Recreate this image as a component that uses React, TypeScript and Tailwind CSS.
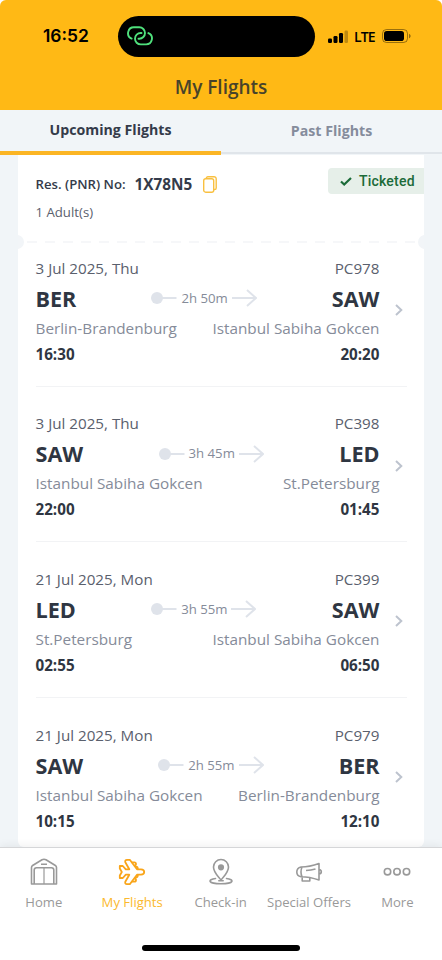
import type { ReactNode } from "react";

type Flight = {
  date: string;
  flightNo: string;
  from: string;
  fromCity: string;
  departure: string;
  to: string;
  toCity: string;
  arrival: string;
  duration: string;
};

const flights: Flight[] = [
  {
    date: "3 Jul 2025, Thu",
    flightNo: "PC978",
    from: "BER",
    fromCity: "Berlin-Brandenburg",
    departure: "16:30",
    to: "SAW",
    toCity: "Istanbul Sabiha Gokcen",
    arrival: "20:20",
    duration: "2h 50m",
  },
  {
    date: "3 Jul 2025, Thu",
    flightNo: "PC398",
    from: "SAW",
    fromCity: "Istanbul Sabiha Gokcen",
    departure: "22:00",
    to: "LED",
    toCity: "St.Petersburg",
    arrival: "01:45",
    duration: "3h 45m",
  },
  {
    date: "21 Jul 2025, Mon",
    flightNo: "PC399",
    from: "LED",
    fromCity: "St.Petersburg",
    departure: "02:55",
    to: "SAW",
    toCity: "Istanbul Sabiha Gokcen",
    arrival: "06:50",
    duration: "3h 55m",
  },
  {
    date: "21 Jul 2025, Mon",
    flightNo: "PC979",
    from: "SAW",
    fromCity: "Istanbul Sabiha Gokcen",
    departure: "10:15",
    to: "BER",
    toCity: "Berlin-Brandenburg",
    arrival: "12:10",
    duration: "2h 55m",
  },
];

function StatusBar() {
  return (
    <div className="flex h-[72px] items-center pl-[43px]">
      <div className="w-[75px] pt-px font-['Inter',sans-serif] text-[17.4px] font-semibold">16:52</div>
      <div className="flex h-[41px] w-[197px] items-center rounded-full bg-black pl-[9px]">
        <svg width="26" height="20" viewBox="0 0 26 20" fill="none" stroke="#4fe07c" strokeWidth="1.9" strokeLinecap="round">
          <path d="M4.6 12.6A5.9 5.9 0 0 1 7.2 1.3H12.3A5.7 5.7 0 0 1 12.3 12.7H11.5" />
          <path d="M21.4 7.1A5.9 5.9 0 0 1 18.8 18.4H13.7A5.7 5.7 0 0 1 13.7 7H14.5" />
        </svg>
      </div>
      <svg className="ml-[13px]" width="20" height="13" viewBox="0 0 20 13">
        <rect x="0" y="8.5" width="4" height="4.5" rx="1.2" />
        <rect x="5.5" y="6" width="4" height="7" rx="1.2" />
        <rect x="11" y="3" width="4" height="10" rx="1.2" />
        <rect x="16.5" y="0.5" width="3.5" height="12.5" rx="1.2" opacity=".25" />
      </svg>
      <div className="ml-[6px] w-[28px] text-[14px] font-semibold tracking-[-0.9px]">LTE</div>
      <svg width="29" height="14" viewBox="0 0 29 14">
        <rect x="0.5" y="0.5" width="25" height="13" rx="4" fill="none" stroke="#000" strokeOpacity=".4" />
        <rect x="2" y="2" width="20" height="10" rx="2.8" />
        <path d="M27 4.7v4.6c1-.4 1.6-1.3 1.6-2.3S28 5.1 27 4.7z" opacity=".45" />
      </svg>
    </div>
  );
}

function Tabs() {
  return (
    <div className="flex h-[45px] text-[14.2px] font-bold">
      <div className="flex flex-1 items-center justify-center border-b-4 border-[#fbb524] pb-[2px] text-[#343b4a]">
        Upcoming Flights
      </div>
      <div className="mb-px flex flex-1 items-center justify-center border-b-2 border-[#e0e5ea] pb-px text-[#858c9c]">
        Past Flights
      </div>
    </div>
  );
}

function Reservation() {
  return (
    <div className="h-[87px] pl-[17.5px]">
      <div className="flex h-[45px] pt-[13px]">
        <div className="flex h-[33px] items-center text-[#343b4a]">
          <span className="w-[99px] text-[13.2px] font-semibold">Res. (PNR) No:</span>
          <span className="w-[68px] text-[15.3px] font-bold">1X78N5</span>
          <svg width="14" height="17" viewBox="0 0 14 17" fill="none" stroke="#f9c040" strokeWidth="1.4">
            <rect x="0.7" y="2.8" width="10" height="13.4" rx="2" />
            <path d="M3.3 2.8V2.3A1.6 1.6 0 0 1 4.9.7H11A2.2 2.2 0 0 1 13.2 2.9V11.9A1.6 1.6 0 0 1 11.6 13.5H10.8" />
          </svg>
        </div>
        <div className="ml-auto flex h-[26px] w-[96px] items-center rounded-l bg-[#e6efe9] pl-[12px] text-[#1b6b39]">
          <svg width="12" height="9" viewBox="0 0 12 9" fill="none" stroke="currentColor" strokeWidth="2.2">
            <path d="M1 4.5 4.2 7.5 11 1" />
          </svg>
          <span className="ml-[7px] font-['Roboto',sans-serif] text-[14px] font-medium tracking-[0.2px]">Ticketed</span>
        </div>
      </div>
      <div className="text-[13.2px] leading-[24px] text-[#5a606d]">1 Adult(s)</div>
    </div>
  );
}

function TearLine() {
  return (
    <div className="relative h-0">
      <svg className="absolute -top-[7px] left-0" width="406" height="14" viewBox="0 0 406 14">
        <path d="M9 7H400" stroke="#f3f5f7" strokeWidth="1.5" strokeDasharray="10 8" />
        <circle cx="-1" cy="7" r="7" fill="#f2f5f8" />
        <circle cx="407" cy="7" r="7" fill="#f2f5f8" />
      </svg>
    </div>
  );
}

function FlightRow({ flight }: { flight: Flight }) {
  return (
    <div className="flex h-[155.5px] items-center border-b border-[#f2f3f5] pt-[4px] last:border-0">
      <div className="w-[344px]">
        <div className="flex justify-between text-[15.2px] leading-[28px] text-[#5a606d]">
          <span>{flight.date}</span>
          <span>{flight.flightNo}</span>
        </div>
        <div className="flex items-center justify-between text-[21.6px] leading-[33px] font-bold text-[#2f3642]">
          <span>{flight.from}</span>
          <div className="flex items-center text-[13.2px] font-normal text-[#858b99]">
            <svg width="26" height="12" viewBox="0 0 26 12">
              <circle cx="6" cy="6" r="6" fill="#dfe3ea" />
              <path d="M11 6H25.5" stroke="#dfe3ea" strokeWidth="2" />
            </svg>
            <span className="mx-[4px]">{flight.duration}</span>
            <svg width="25" height="18" viewBox="0 0 25 18" fill="none" stroke="#dfe3ea" strokeWidth="2">
              <path d="M0 9H24M15 1 24 9 15 17" />
            </svg>
          </div>
          <span>{flight.to}</span>
        </div>
        <div className="flex justify-between text-[15.3px] leading-[27px] text-[#858b99]">
          <span>{flight.fromCity}</span>
          <span>{flight.toCity}</span>
        </div>
        <div className="flex justify-between text-[15.2px] leading-[25px] font-bold text-[#2f3642]">
          <span>{flight.departure}</span>
          <span>{flight.arrival}</span>
        </div>
      </div>
      <svg className="ml-[15px]" width="8" height="12" viewBox="0 0 8 12" fill="none" stroke="#bdc3ce" strokeWidth="2">
        <path d="M1 1 6.3 6 1 11" />
      </svg>
    </div>
  );
}

function NavItem({ label, active, children }: { label: string; active?: boolean; children: ReactNode }) {
  return (
    <div className={`flex w-[88.4px] shrink-0 flex-col items-center ${active ? "text-[#f9a51a]" : "text-[#999]"}`}>
      <svg width="28" height="28" viewBox="0 0 28 28" fill="none" stroke="currentColor" strokeWidth="1.6" strokeLinejoin="round">
        {children}
      </svg>
      <span className={`mt-[6px] text-[13.1px] leading-[20px] whitespace-nowrap ${active ? "text-[#fbb92d]" : ""}`}>
        {label}
      </span>
    </div>
  );
}

function BottomNav() {
  return (
    <div className="relative flex h-[113px] shrink-0 flex-col border-t border-[#d5d6d8] bg-white shadow-[0_-2px_8px_rgba(0,0,0,0.06)]">
      <div className="-ml-[0.4px] flex pt-[10px]">
        <NavItem label="Home">
          <path d="M1.5 26V9.5Q1.5 8.2 2.6 7.5L12 1.8Q14 .7 16 1.8L25.4 7.5Q26.5 8.2 26.5 9.5V26Z" />
          <path d="M4.2 26V12Q4.2 9.7 6.5 9.7H21.5Q23.8 9.7 23.8 12V26M11 6.3H17" />
          <path d="M14 9.7V26" strokeWidth="1.2" />
        </NavItem>
        <NavItem label="My Flights" active>
          <g strokeWidth="1.8">
            <path d="M1.8 8H4.8L7.8 11.3H11.3L7.3 4.2Q6.7 1.8 9 1.8H11.8L19 11.3H23Q26.2 11.5 26.2 14T23 16.7H19L11.8 26.2H9Q6.7 26.2 7.3 23.8L11.3 16.7H7.8L4.8 20H1.8V17.5L3.8 14 1.8 10.5Z" />
            <path d="M13.7 4.3H16.3Q18 4.3 18 6T16 7.6M17 8.6H18Q19.8 8.6 19.8 11M13.7 23.7H16.3Q18 23.7 18 22T16 20.4M17 19.4H18Q19.8 19.4 19.8 17" />
          </g>
        </NavItem>
        <NavItem label="Check-in">
          <path d="M14 22C11 18 6.5 14.5 6.5 9A7.5 7.5 0 0 1 21.5 9C21.5 14.5 17 18 14 22Z" />
          <circle cx="14" cy="9.3" r="2.3" fill="currentColor" />
          <path d="M8.5 20.5C.5 21.5.5 25.7 14 25.7S27.5 21.5 19.5 20.5M11.8 22.8H16.2" strokeLinecap="round" />
        </NavItem>
        <NavItem label="Special Offers">
          <path d="M6 9Q14.5 9 24 5.5V22Q14.5 18.7 6 18.7Q1.8 18 1.8 14T6 9ZM7 9Q5 14 7 18.7M24 11.5Q26.3 11.7 26.3 13.7T24 16M11 12.5Q16 12.3 20.5 11M7.2 19V23H14.8V20" />
        </NavItem>
        <NavItem label="More">
          <circle cx="4.5" cy="13.7" r="3.2" />
          <circle cx="14" cy="13.7" r="3.2" />
          <circle cx="23.5" cy="13.7" r="3.2" />
        </NavItem>
      </div>
      <div className="mx-auto mt-auto mb-[9px] h-[6px] w-[158px] rounded-full bg-black" />
    </div>
  );
}

export default function App() {
  return (
    <div className="flex h-[960px] w-[442px] flex-col overflow-hidden rounded-t-[6px] bg-[#f1f5f8] font-['Open_Sans',sans-serif]">
      <header className="h-[110px] shrink-0 bg-[#ffb915]">
        <StatusBar />
        <h1 className="text-center text-[19px] leading-[30px] font-semibold text-[#48432a]">My Flights</h1>
      </header>
      <Tabs />
      <main className="mx-[18px] h-[692px] shrink-0 overflow-hidden rounded-b-md bg-white">
        <Reservation />
        <TearLine />
        <div className="-mt-[11px] px-[17.5px]">
          {flights.map((flight) => (
            <FlightRow key={flight.flightNo} flight={flight} />
          ))}
        </div>
      </main>
      <BottomNav />
    </div>
  );
}
